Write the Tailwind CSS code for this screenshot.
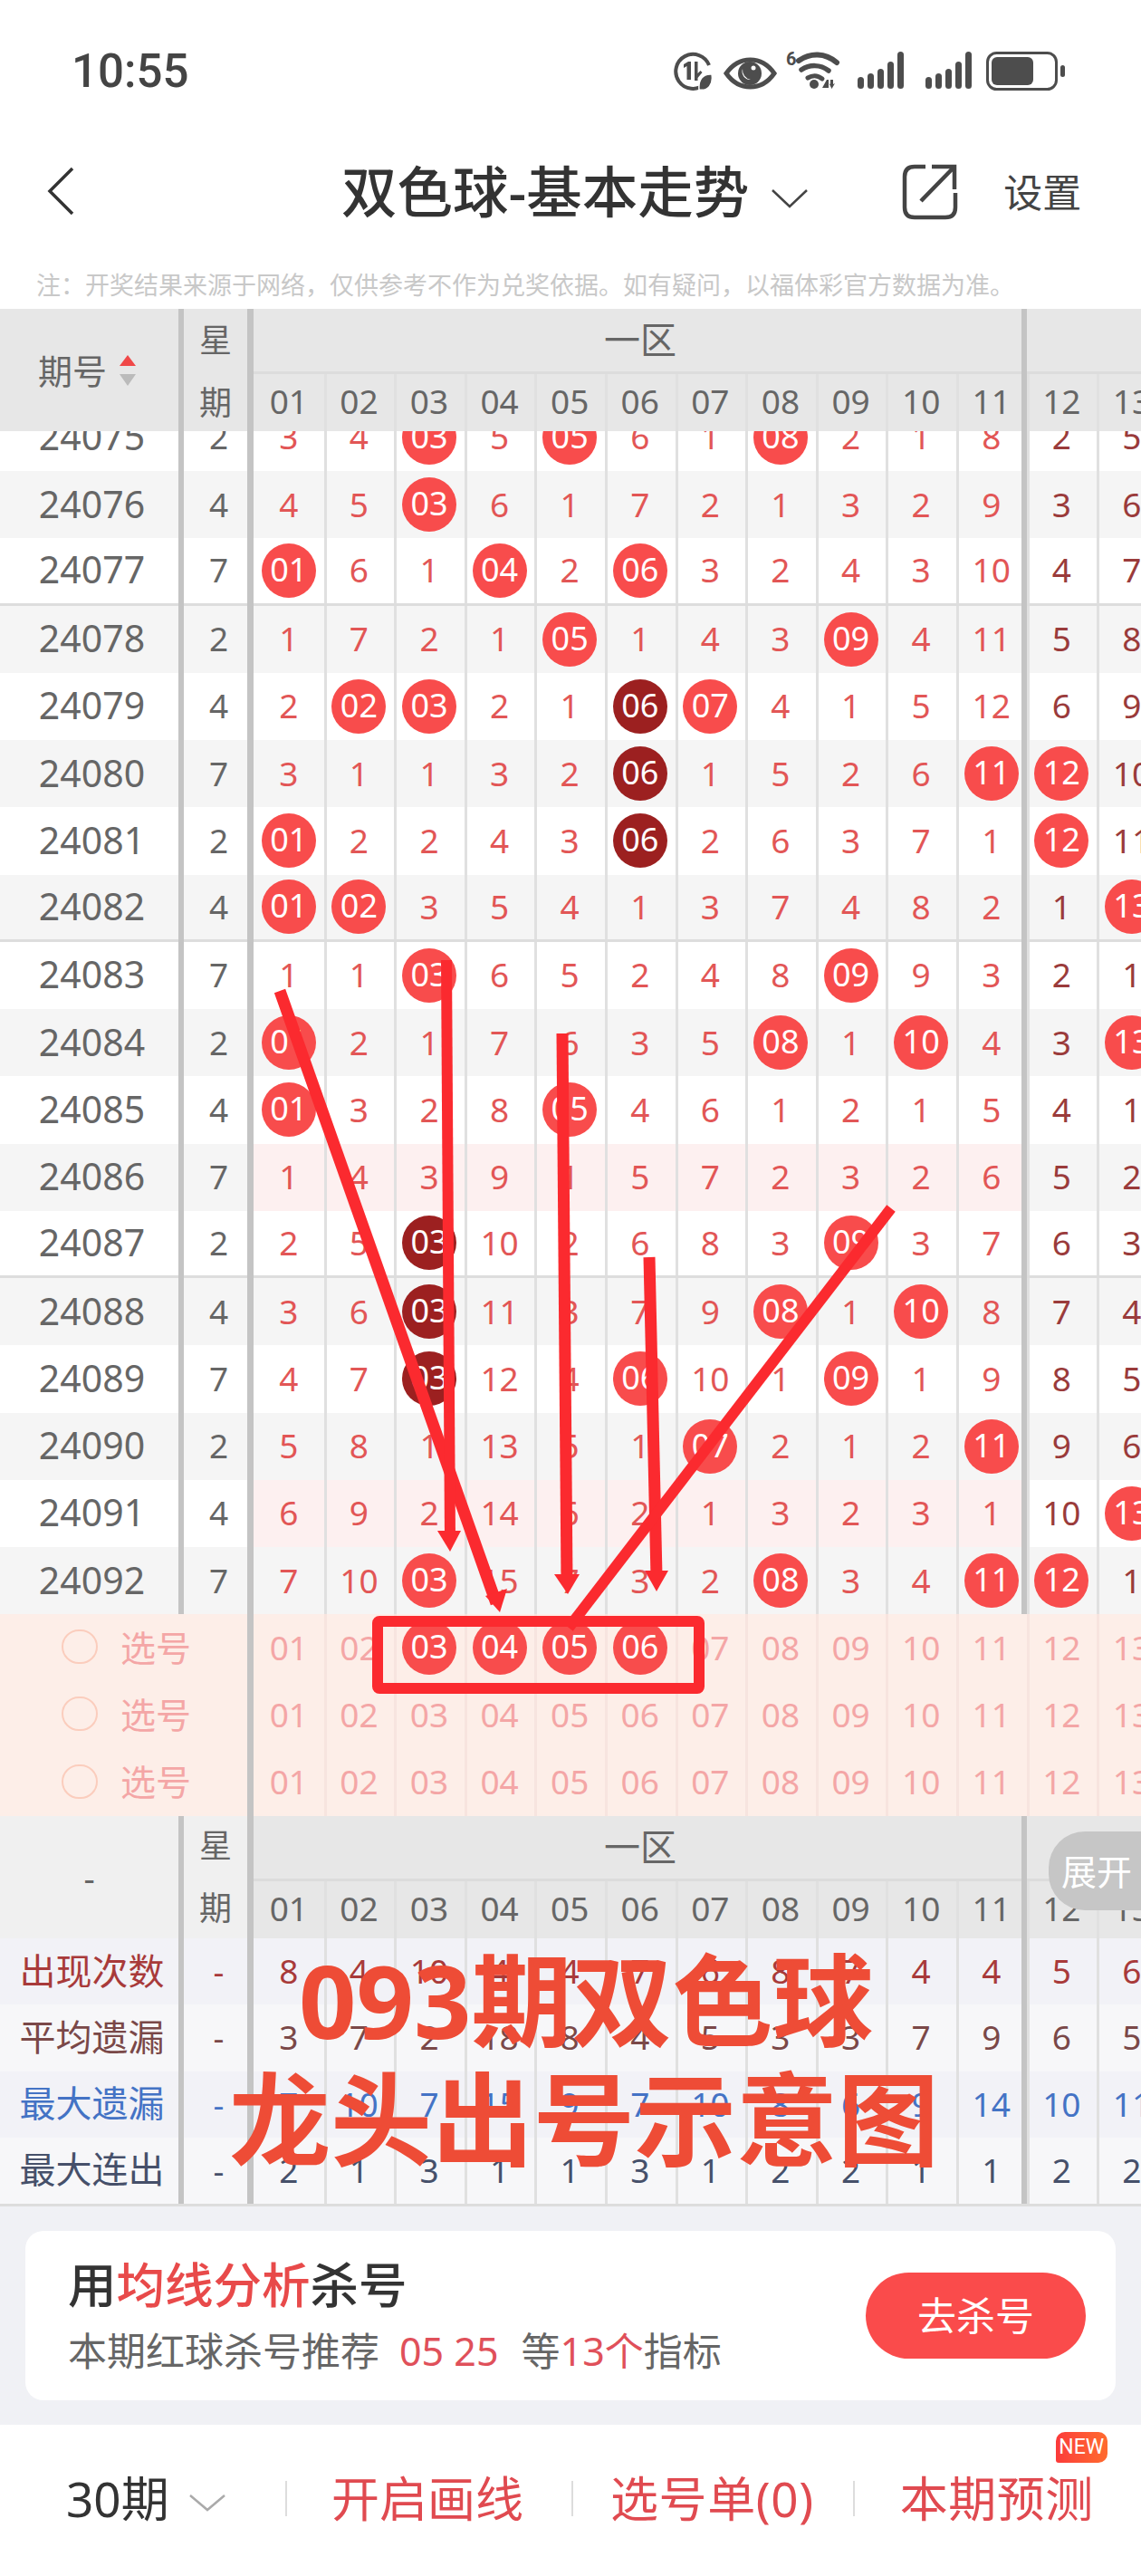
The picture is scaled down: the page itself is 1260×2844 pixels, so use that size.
<!DOCTYPE html>
<html lang="zh">
<head>
<meta charset="utf-8">
<title>双色球-基本走势</title>
<script src="https://cdn.jsdelivr.net/npm/@tailwindcss/browser@4"></script>
</head>
<body class="bg-white">
<div class="relative w-[1260px] h-[2844px] overflow-hidden bg-white font-['Noto_Sans','Noto_Sans_CJK_SC',sans-serif] text-[#666]">

  <!-- status bar -->
  <div class="flex h-[156px] items-center justify-between pl-[79px] pr-[84px]">
    <span class="font-['Roboto',sans-serif] text-[51px] font-medium leading-none text-[#444]">10:55</span>
    <svg width="432" height="44" viewBox="744 56 432 44" fill="#4d4d4d">
      <path d="M778 93 A19 19 0 1 1 783 72" fill="none" stroke="#4d4d4d" stroke-width="4"/>
      <path d="M755 71l5-3h3v20h-4.500V73l-3.500 2z"/>
      <path d="M767 68h3.500v13l3-3 2 2-5 6v3h-3.500z"/>
      <path d="M786 82c-10-1-15 6-14 17 10 2 16-6 14-17z" stroke="#fff" stroke-width="1.500"/>
      <path d="M802 81c7-10 16-15 26.500-15S848 71 855 81c-7 10-16 15-26.500 15S809 91 802 81z" fill="none" stroke="#4d4d4d" stroke-width="5"/>
      <circle cx="828" cy="81" r="13"/>
      <path d="M820 76a11 11 0 0 0 9 12 9 9 0 0 1-9-12z" fill="#fff"/>
      <circle cx="832" cy="75" r="2.500" fill="#fff"/>
      <text x="868" y="72" font-family="Roboto,sans-serif" font-size="20" font-weight="700" fill="#4d4d4d">6</text>
      <path d="M882 67c13-9 29-9 42 2" fill="none" stroke="#4d4d4d" stroke-width="6" stroke-linecap="round"/>
      <path d="M885 77c9-6 21-6 30 1" fill="none" stroke="#4d4d4d" stroke-width="5.500" stroke-linecap="round"/>
      <path d="M892 86c5-3 11-3 16 1" fill="none" stroke="#4d4d4d" stroke-width="5" stroke-linecap="round"/>
      <circle cx="899" cy="93" r="5"/>
      <path d="M908 97l5-9h2v9zM917 88h3v5l2-1-3.500 6-3-6 1.500 1z"/>
      <rect x="947" y="85" width="7" height="13" rx="3.500"/>
      <rect x="958" y="81" width="7" height="17" rx="3.500"/>
      <rect x="969" y="76" width="7" height="22" rx="3.500"/>
      <rect x="980" y="68" width="7" height="30" rx="3.500"/>
      <rect x="991" y="57" width="7" height="41" rx="3.500"/>
      <rect x="1022" y="85" width="7" height="13" rx="3.500"/>
      <rect x="1033" y="81" width="7" height="17" rx="3.500"/>
      <rect x="1044" y="76" width="7" height="22" rx="3.500"/>
      <rect x="1055" y="68" width="7" height="30" rx="3.500"/>
      <rect x="1066" y="57" width="7" height="41" rx="3.500"/>
      <rect x="1090.500" y="58.500" width="76" height="40" rx="10" fill="none" stroke="#4d4d4d" stroke-width="3"/>
      <rect x="1095" y="63" width="46" height="31" rx="6"/>
      <rect x="1171" y="72" width="5" height="13" rx="2.500"/>
    </svg>
  </div>

  <!-- nav bar -->
  <div class="flex h-[112px] items-center pl-[52px]">
    <svg width="32" height="56" viewBox="0 0 32 56" fill="none" stroke="#333" stroke-width="3.500" class="mt-[-2px] shrink-0"><path d="M28 3 3 28l25 25"/></svg>
    <span class="ml-[293px] whitespace-nowrap text-[61.500px] font-medium leading-none text-[#333]">双色球-基本走势</span>
    <svg width="42" height="22" viewBox="0 0 42 22" fill="none" stroke="#444" stroke-width="2.500" class="ml-[24px] mt-[14px] shrink-0"><path d="M2 2l19 18L40 2"/></svg>
    <svg width="62" height="62" viewBox="0 0 62 62" fill="none" stroke="#444" stroke-width="4.500" class="ml-[103px] shrink-0"><path d="M26 3H14Q3 3 3 14v34q0 11 11 11h34q11 0 11-11V32"/><path d="M21 41 58 3M33 3h25v25"/></svg>
    <span class="ml-[50px] text-[43px] leading-none text-[#444]">设置</span>
  </div>

  <!-- note -->
  <div class="h-[73px] pl-[40px] pt-[33px] text-[27px] leading-none text-[#c8c8c8]">注：开奖结果来源于网络，仅供参考不作为兑奖依据。如有疑问，以福体彩官方数据为准。</div>

  <!-- table -->
  <div class="[&_ul]:grid [&_ul]:grid-cols-[203px_77px_repeat(13,77.6px)] [&_ul]:w-[1289px] [&_li]:flex [&_li]:items-center [&_li]:justify-center [&_li]:pb-[2px] [&_li]:leading-none [&_li]:whitespace-nowrap [&_li:nth-child(n+4)]:shadow-[inset_3px_0_0_#e0e0e0] [&_b]:flex [&_b]:h-[60px] [&_b]:w-[60px] [&_b]:translate-y-[1px] [&_b]:items-center [&_b]:justify-center [&_b]:rounded-full [&_b]:bg-[#f84c4c] [&_b]:pb-[2px] [&_b]:text-[36px] [&_b]:font-normal [&_b]:text-white">

    <!-- header -->
    <div class="relative flex h-[135px] overflow-hidden bg-[#e7e7e7]">
      <div class="flex w-[197px] shrink-0 items-center gap-[14px] pl-[42px] text-[38px] leading-none">
        <span class="whitespace-nowrap">期号</span>
        <svg width="18" height="34" viewBox="0 0 18 34" class="shrink-0"><path d="M9 0l9 12H0z" fill="#f04848"/><path d="M0 21h18L9 34z" fill="#bbb"/></svg>
      </div>
      <div class="ml-[6px] flex w-[70px] shrink-0 flex-col items-center text-[36px] leading-none">
        <span class="mt-[17px]">星</span><span class="mt-[33px]">期</span>
      </div>
      <div class="ml-[7px] w-[980px] shrink-0">
        <div class="flex h-[67px] w-[848px] items-center justify-center pl-[6px] text-[40px] leading-none">一区</div>
        <div class="mt-[2px] h-[3px] bg-[#dcdcdc]"></div>
        <ul class="!grid-cols-[repeat(13,77.6px)] !w-[1009px] h-[63px] text-[37px] [&>li]:!pb-[5px] [&>li:first-child]:!shadow-none [&>li:nth-child(-n+3)]:shadow-[inset_3px_0_0_#e0e0e0]"><li>01</li><li>02</li><li>03</li><li>04</li><li>05</li><li>06</li><li>07</li><li>08</li><li>09</li><li>10</li><li>11</li><li>12</li><li>13</li></ul>
      </div>
      <div class="absolute inset-y-0 left-[197px] w-[6px] bg-[#c4c4c4]"></div>
      <div class="absolute inset-y-0 left-[273px] w-[7px] bg-[#c4c4c4]"></div>
      <div class="absolute inset-y-0 left-[1128px] w-[6px] bg-[#c4c4c4]"></div>
    </div>

    <!-- rows -->
    <div class="relative h-[1306px] overflow-hidden text-[37px] [&_ul]:h-[74.25px] [&_li:first-child]:text-[41px] [&_li:nth-child(n+3):nth-child(-n+13)]:text-[#e25656] [&_li:nth-child(n+14)]:text-[#9a3b3b] [&_.d]:!bg-[#9c2020] [&_ul:nth-of-type(even)]:bg-[#f5f5f5] [&_.g]:border-b-[3px] [&_.g]:border-[#dddddd] [&_.p>li:nth-child(n+3):nth-child(-n+13)]:bg-[#fdf0f0]">
      <ul class="mt-[-30.250px]"><li>24075</li><li>2</li><li>3</li><li>4</li><li><b>03</b></li><li>5</li><li><b>05</b></li><li>6</li><li>1</li><li><b>08</b></li><li>2</li><li>1</li><li>8</li><li>2</li><li>5</li></ul>
      <ul><li>24076</li><li>4</li><li>4</li><li>5</li><li><b>03</b></li><li>6</li><li>1</li><li>7</li><li>2</li><li>1</li><li>3</li><li>2</li><li>9</li><li>3</li><li>6</li></ul>
      <ul class="g"><li>24077</li><li>7</li><li><b>01</b></li><li>6</li><li>1</li><li><b>04</b></li><li>2</li><li><b>06</b></li><li>3</li><li>2</li><li>4</li><li>3</li><li>10</li><li>4</li><li>7</li></ul>
      <ul><li>24078</li><li>2</li><li>1</li><li>7</li><li>2</li><li>1</li><li><b>05</b></li><li>1</li><li>4</li><li>3</li><li><b>09</b></li><li>4</li><li>11</li><li>5</li><li>8</li></ul>
      <ul><li>24079</li><li>4</li><li>2</li><li><b>02</b></li><li><b>03</b></li><li>2</li><li>1</li><li><b class="d">06</b></li><li><b>07</b></li><li>4</li><li>1</li><li>5</li><li>12</li><li>6</li><li>9</li></ul>
      <ul><li>24080</li><li>7</li><li>3</li><li>1</li><li>1</li><li>3</li><li>2</li><li><b class="d">06</b></li><li>1</li><li>5</li><li>2</li><li>6</li><li><b>11</b></li><li><b>12</b></li><li>10</li></ul>
      <ul><li>24081</li><li>2</li><li><b>01</b></li><li>2</li><li>2</li><li>4</li><li>3</li><li><b class="d">06</b></li><li>2</li><li>6</li><li>3</li><li>7</li><li>1</li><li><b>12</b></li><li>11</li></ul>
      <ul class="g"><li>24082</li><li>4</li><li><b>01</b></li><li><b>02</b></li><li>3</li><li>5</li><li>4</li><li>1</li><li>3</li><li>7</li><li>4</li><li>8</li><li>2</li><li>1</li><li><b>13</b></li></ul>
      <ul><li>24083</li><li>7</li><li>1</li><li>1</li><li><b>03</b></li><li>6</li><li>5</li><li>2</li><li>4</li><li>8</li><li><b>09</b></li><li>9</li><li>3</li><li>2</li><li>1</li></ul>
      <ul><li>24084</li><li>2</li><li><b>01</b></li><li>2</li><li>1</li><li>7</li><li>6</li><li>3</li><li>5</li><li><b>08</b></li><li>1</li><li><b>10</b></li><li>4</li><li>3</li><li><b>13</b></li></ul>
      <ul><li>24085</li><li>4</li><li><b>01</b></li><li>3</li><li>2</li><li>8</li><li><b>05</b></li><li>4</li><li>6</li><li>1</li><li>2</li><li>1</li><li>5</li><li>4</li><li>1</li></ul>
      <ul class="p"><li>24086</li><li>7</li><li>1</li><li>4</li><li>3</li><li>9</li><li>1</li><li>5</li><li>7</li><li>2</li><li>3</li><li>2</li><li>6</li><li>5</li><li>2</li></ul>
      <ul class="g"><li>24087</li><li>2</li><li>2</li><li>5</li><li><b class="d">03</b></li><li>10</li><li>2</li><li>6</li><li>8</li><li>3</li><li><b>09</b></li><li>3</li><li>7</li><li>6</li><li>3</li></ul>
      <ul><li>24088</li><li>4</li><li>3</li><li>6</li><li><b class="d">03</b></li><li>11</li><li>3</li><li>7</li><li>9</li><li><b>08</b></li><li>1</li><li><b>10</b></li><li>8</li><li>7</li><li>4</li></ul>
      <ul><li>24089</li><li>7</li><li>4</li><li>7</li><li><b class="d">03</b></li><li>12</li><li>4</li><li><b>06</b></li><li>10</li><li>1</li><li><b>09</b></li><li>1</li><li>9</li><li>8</li><li>5</li></ul>
      <ul><li>24090</li><li>2</li><li>5</li><li>8</li><li>1</li><li>13</li><li>5</li><li>1</li><li><b>07</b></li><li>2</li><li>1</li><li>2</li><li><b>11</b></li><li>9</li><li>6</li></ul>
      <ul class="p"><li>24091</li><li>4</li><li>6</li><li>9</li><li>2</li><li>14</li><li>6</li><li>2</li><li>1</li><li>3</li><li>2</li><li>3</li><li>1</li><li>10</li><li><b>13</b></li></ul>
      <ul><li>24092</li><li>7</li><li>7</li><li>10</li><li><b>03</b></li><li>15</li><li>7</li><li>3</li><li>2</li><li><b>08</b></li><li>3</li><li>4</li><li><b>11</b></li><li><b>12</b></li><li>1</li></ul>
      <div class="absolute inset-y-0 left-[197px] w-[6px] bg-[#c4c4c4]"></div>
      <div class="absolute inset-y-0 left-[273px] w-[7px] bg-[#c4c4c4]"></div>
      <div class="absolute inset-y-0 left-[1128px] w-[6px] bg-[#c4c4c4]"></div>
    </div>

    <!-- number picking rows -->
    <div class="relative h-[223px] bg-[#fdeee8] text-[37px] text-[#f4a6a6] [&_ul]:h-[74.330px] [&_li:nth-child(n+4)]:!shadow-[inset_3px_0_0_#f7e4df] [&_li:first-child]:justify-start [&_li:first-child]:gap-[25px] [&_li:first-child]:pl-[68px] [&_li:first-child]:text-[39px] [&_i]:h-[38px] [&_i]:w-[40px] [&_i]:shrink-0 [&_i]:rounded-full [&_i]:border-2 [&_i]:border-[#fbcdbd]">
      <ul><li><i></i>选号</li><li></li><li>01</li><li>02</li><li><b>03</b></li><li><b>04</b></li><li><b>05</b></li><li><b>06</b></li><li>07</li><li>08</li><li>09</li><li>10</li><li>11</li><li>12</li><li>13</li></ul>
      <ul><li><i></i>选号</li><li></li><li>01</li><li>02</li><li>03</li><li>04</li><li>05</li><li>06</li><li>07</li><li>08</li><li>09</li><li>10</li><li>11</li><li>12</li><li>13</li></ul>
      <ul><li><i></i>选号</li><li></li><li>01</li><li>02</li><li>03</li><li>04</li><li>05</li><li>06</li><li>07</li><li>08</li><li>09</li><li>10</li><li>11</li><li>12</li><li>13</li></ul>
      <div class="absolute inset-y-0 left-[273px] w-[7px] bg-[#c4c4c4]"></div>
    </div>

    <!-- second header -->
    <div class="relative flex h-[135px] overflow-hidden bg-[#e7e7e7]">
      <div class="flex w-[197px] shrink-0 items-center justify-center bg-[#f0f0f0] text-[38px] leading-none">-</div>
      <div class="ml-[6px] flex w-[70px] shrink-0 flex-col items-center bg-[#f0f0f0] text-[36px] leading-none">
        <span class="mt-[15px]">星</span><span class="mt-[33px]">期</span>
      </div>
      <div class="ml-[7px] w-[980px] shrink-0">
        <div class="flex h-[67px] w-[848px] items-center justify-center pl-[6px] text-[40px] leading-none">一区</div>
        <div class="mt-[2px] h-[3px] bg-[#dcdcdc]"></div>
        <ul class="!grid-cols-[repeat(13,77.6px)] !w-[1009px] h-[63px] text-[37px] [&>li]:!pb-[5px] [&>li:first-child]:!shadow-none [&>li:nth-child(-n+3)]:shadow-[inset_3px_0_0_#e0e0e0]"><li>01</li><li>02</li><li>03</li><li>04</li><li>05</li><li>06</li><li>07</li><li>08</li><li>09</li><li>10</li><li>11</li><li>12</li><li>13</li></ul>
      </div>
      <div class="absolute inset-y-0 left-[197px] w-[6px] bg-[#c4c4c4]"></div>
      <div class="absolute inset-y-0 left-[273px] w-[7px] bg-[#c4c4c4]"></div>
      <div class="absolute inset-y-0 left-[1128px] w-[6px] bg-[#c4c4c4]"></div>
      <div class="absolute left-[1158px] top-[17px] flex h-[87px] w-[102px] items-center justify-start rounded-l-[40px] bg-[#c6c6c6] pl-[14px] text-[39px] leading-none text-white">展开</div>
    </div>

    <!-- stats -->
    <div class="relative border-b-[3px] border-[#dddddd] text-[37px] [&_ul]:h-[73.250px] [&_li:first-child]:text-[40px]">
      <ul class="bg-[#f2f2f7] text-[#a83a3a]"><li>出现次数</li><li>-</li><li>8</li><li>4</li><li>10</li><li>4</li><li>4</li><li>7</li><li>6</li><li>8</li><li>7</li><li>4</li><li>4</li><li>5</li><li>6</li></ul>
      <ul class="bg-[#f7f7f9] text-[#7a4848]"><li>平均遗漏</li><li>-</li><li>3</li><li>7</li><li>2</li><li>18</li><li>8</li><li>4</li><li>5</li><li>3</li><li>3</li><li>7</li><li>9</li><li>6</li><li>5</li></ul>
      <ul class="bg-[#f2f2f7] text-[#4473c5]"><li>最大遗漏</li><li>-</li><li>7</li><li>10</li><li>7</li><li>15</li><li>9</li><li>7</li><li>10</li><li>8</li><li>6</li><li>9</li><li>14</li><li>10</li><li>11</li></ul>
      <ul class="bg-[#f7f7f9] text-[#46506a]"><li>最大连出</li><li>-</li><li>2</li><li>1</li><li>3</li><li>1</li><li>1</li><li>3</li><li>1</li><li>2</li><li>2</li><li>1</li><li>1</li><li>2</li><li>2</li></ul>
      <div class="absolute inset-y-0 left-[197px] w-[6px] bg-[#c4c4c4]"></div>
      <div class="absolute inset-y-0 left-[273px] w-[7px] bg-[#c4c4c4]"></div>
      <div class="absolute inset-y-0 left-[1128px] w-[6px] bg-[#c4c4c4]"></div>
    </div>
  </div>

  <!-- promo card -->
  <div class="flex h-[241px] items-start bg-[#f0f1f5] px-[28px] pt-[27px]">
    <div class="flex h-[187px] w-[1209px] items-center justify-between rounded-[20px] bg-white pl-[47px] pr-[33px]">
      <div class="flex flex-col gap-[25px] leading-none">
        <p class="text-[53.500px] font-medium text-[#333]">用<span class="text-[#e84a4a]">均线分析</span>杀号</p>
        <p class="text-[43px] text-[#666]">本期红球杀号推荐<span class="ml-[22px] text-[#e0505a]">05 25</span><span class="ml-[25px]">等</span><span class="text-[#e0505a]">13个</span>指标</p>
      </div>
      <div class="flex h-[95px] w-[243px] items-center justify-center rounded-full bg-[#fa4b4b] text-[43px] leading-none text-white">去杀号</div>
    </div>
  </div>

  <!-- bottom bar -->
  <div class="flex h-[167px] items-center pb-[5px] pl-[73px] text-[53px] leading-none text-[#e04a50]">
    <span class="w-[109px] whitespace-nowrap text-[#333]">30期</span>
    <svg width="42" height="20" viewBox="0 0 42 20" fill="none" stroke="#aaa" stroke-width="2.500" class="ml-[26px] mt-[10px] shrink-0"><path d="M2 2l19 16L40 2"/></svg>
    <i class="ml-[65px] h-[39px] w-[2px] bg-[#dddddd]"></i>
    <span class="ml-[49px] whitespace-nowrap">开启画线</span>
    <i class="ml-[53px] h-[39px] w-[2px] bg-[#dddddd]"></i>
    <span class="ml-[41px] whitespace-nowrap tracking-[0.6px]">选号单(0)</span>
    <i class="ml-[43px] h-[39px] w-[2px] bg-[#dddddd]"></i>
    <span class="relative ml-[50px] whitespace-nowrap tracking-[0.5px]">本期预测
      <span class="absolute left-[172px] top-[-47px] flex h-[34px] w-[57px] items-center justify-center rounded-t-[10px] rounded-br-[10px] rounded-bl-[3px] bg-gradient-to-r from-[#fb3a3a] to-[#ff6a2e] font-['Roboto',sans-serif] text-[23px] tracking-normal text-white">NEW</span>
    </span>
  </div>

  <!-- hand-drawn annotation -->
  <svg class="absolute left-0 top-0" width="1260" height="2844" viewBox="0 0 1260 2844" fill="none">
    <g stroke="#fb2a2f" stroke-width="13">
      <path d="M309 1094 548 1770"/>
      <path d="M493 1060 497 1700" stroke-width="12"/>
      <path d="M621 1141 626 1745" stroke-width="13"/>
      <path d="M717 1388 725 1740" stroke-width="13"/>
      <path d="M984 1334 628 1797" stroke-width="12"/>
      <rect x="417" y="1790" width="355" height="74" rx="2" stroke-width="12"/>
    </g>
    <g fill="#fb2a2f">
      <path d="M483 1690h26l-12 23z"/>
      <path d="M612 1738h28l-13 22z"/>
      <path d="M712 1734h26l-13 23z"/>
      <path d="M536 1762l24-8-8 26z"/>
    </g>
  </svg>
  <div class="absolute left-[330px] top-[2140px] text-[111px] font-bold leading-[137px] text-[#ee4c36]">093期双色球</div>
  <div class="absolute left-[253px] top-[2271px] whitespace-nowrap text-[112px] font-bold leading-[137px] text-[#ee4c36]">龙头出号示意图</div>
</div>
</body>
</html>
